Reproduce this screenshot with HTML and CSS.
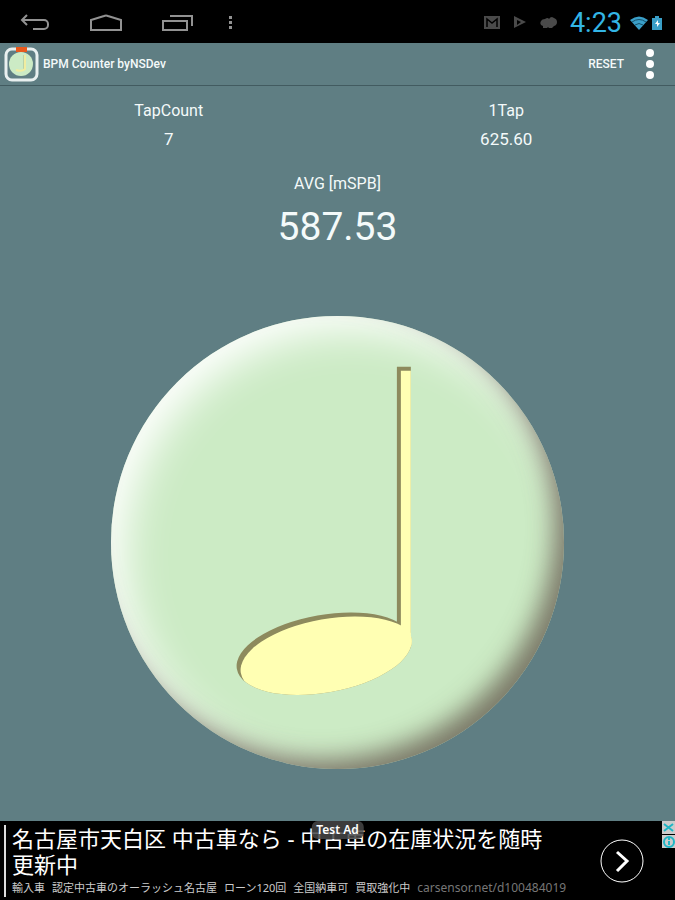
FILE: index.html
```html
<!DOCTYPE html>
<html lang="en">
<head>
    <meta charset="UTF-8">
    <meta name="viewport" content="width=device-width, initial-scale=1.0">
    <title>BPM Counter byNSDev</title>
    <link rel="stylesheet" href="styles.css">
</head>
<body>
    <div class="system-bar">
        <nav class="nav-keys">
            <button class="key" aria-label="Back">
                <svg width="30" height="18" viewBox="0 0 30 18"><path d="M7 1L2 6l5 5M2 6h22a4 4 0 0 1 4 4v1a4 4 0 0 1-4 4H13"/></svg>
            </button>
            <button class="key" aria-label="Home">
                <svg width="34" height="18" viewBox="0 0 34 18"><path d="M2 16V6l13-4q2-1 4 0l13 4v10z"/></svg>
            </button>
            <button class="key" aria-label="Recent apps">
                <svg width="32" height="18" viewBox="0 0 32 18"><path d="M1 7h24v9H1zM8 2h22v10"/></svg>
            </button>
            <button class="key key-more" aria-label="Menu">
                <svg width="4" height="14" viewBox="0 0 4 14"><path d="M0 0h3v3H0zM0 5h3v3H0zM0 10h3v3H0z"/></svg>
            </button>
        </nav>
        <div class="status">
            <svg class="notice" width="16" height="13" viewBox="0 0 16 13"><path d="M0 0h16v13H0z"/><path d="M3 11V3l5 4 5-4v8" fill="none" stroke="#000" stroke-width="1.5"/></svg>
            <svg class="notice" width="14" height="13" viewBox="0 0 14 13"><path d="M1 0l12 6L1 12z"/><path d="M4 4l4 2-4 3z" fill="#000"/></svg>
            <svg class="notice" width="17" height="13" viewBox="0 0 17 13"><path d="M1 5q1-2 4-2 1-1 3-1l1 1q1-2 3-2l2 1q3 1 3 4t-3 4l-2 2H9l-1-1-1 1H3v-2Q-1 9 1 5z"/></svg>
            <span class="clock">4:23</span>
            <svg class="signal" width="18" height="14" viewBox="0 0 18 14"><path d="M0 4q9-7 18 0l-9 10z"/><path d="M2 6q7-5 14 0M5 9q4-3 8 0" fill="none" stroke="#14506a"/></svg>
            <svg class="signal" width="10" height="14" viewBox="0 0 10 14"><path d="M3 0h4v2h3v12H0V2h3z"/><path d="M6 4L3 8h2v3l3-4H6z" fill="#fff"/></svg>
        </div>
    </div>

    <header class="action-bar">
        <svg class="logo" width="35" height="35" viewBox="0 0 35 35">
            <rect x="2" y="2" width="31" height="31" rx="6" fill="#5f7e83" stroke="#e9f0f0" stroke-width="3"/>
            <path d="M12 0h11v5H12z" fill="#e8591c"/>
            <circle cx="17" cy="17" r="12" fill="#ccebc5"/>
            <path d="M20 8v14" fill="none" stroke="#a9b98a" stroke-width="1"/>
            <path d="M21 8v14q-3 3-9 1" fill="none" stroke="#f0eda0" stroke-width="2"/>
        </svg>
        <h1>BPM Counter byNSDev</h1>
        <button class="reset">RESET</button>
        <button class="overflow" aria-label="More options">
            <svg width="10" height="30" viewBox="0 0 10 30"><circle cx="5" cy="4" r="4"/><circle cx="5" cy="15" r="4"/><circle cx="5" cy="26" r="4"/></svg>
        </button>
    </header>

    <main>
        <div class="stats">
            <div class="stat">
                <div>TapCount</div>
                <div class="stat-value">7</div>
            </div>
            <div class="stat">
                <div>1Tap</div>
                <div class="stat-value">625.60</div>
            </div>
        </div>
        <div class="average">
            <div>AVG [mSPB]</div>
            <div class="average-value">587.53</div>
        </div>
        <div class="tap-area">
            <button class="tap" aria-label="Tap">
                <svg viewBox="0 0 454 454">
                    <defs>
                        <g id="note">
                            <path d="M287 51h14v276h-14z"/>
                            <ellipse cx="214" cy="339" rx="89" ry="39" transform="rotate(-10 214 339)"/>
                        </g>
                        <clipPath id="note-clip">
                            <path d="M287 51h14v276h-14z"/>
                            <ellipse cx="214" cy="339" rx="89" ry="39" transform="rotate(-10 214 339)"/>
                        </clipPath>
                    </defs>
                    <use href="#note" fill="#8d8a5d"/>
                    <g clip-path="url(#note-clip)">
                        <use href="#note" x="4" y="4" fill="#ffffb3"/>
                    </g>
                </svg>
            </button>
        </div>
    </main>

    <aside class="ad">
        <span class="ad-tag">Test Ad</span>
        <div class="ad-text">
            <p class="ad-title">名古屋市天白区 中古車なら - 中古車の在庫状況を随時更新中</p>
            <p class="ad-line">
                <span>輸入車</span>
                <span>認定中古車のオーラッシュ名古屋</span>
                <span>ローン120回</span>
                <span>全国納車可</span>
                <span>買取強化中</span>
                <a href="#">carsensor.net/d100484019</a>
            </p>
        </div>
        <button class="ad-go" aria-label="Open ad">
            <svg width="46" height="46" viewBox="0 0 46 46"><circle cx="23" cy="23" r="21"/><path d="M18 14l10 9-10 10" stroke-width="3"/></svg>
        </button>
        <div class="ad-choices">
            <button aria-label="Close ad"><svg width="13" height="13" viewBox="0 0 13 13"><path d="M2 3l9 7M11 3l-9 7"/></svg></button>
            <button aria-label="Ad information"><svg width="13" height="13" viewBox="0 0 13 13"><circle cx="7" cy="7" r="5"/><path d="M7 6v4M7 3v2"/></svg></button>
        </div>
    </aside>
</body>
</html>
```
FILE: styles.css
```css
* { box-sizing: border-box; }
body { display: flex; flex-direction: column; min-height: 100vh; margin: 0; background: #5f7e83; color: #f4fafa; font-family: Roboto, "Noto Sans CJK JP", sans-serif; }
button { display: block; margin: 0; padding: 0; border: none; background: none; color: inherit; font: inherit; cursor: pointer; }
svg { display: block; }
h1, p { margin: 0; }

.system-bar { display: flex; align-items: center; justify-content: space-between; height: 43px; padding: 2px 13px 0 20px; background: #000; }
.nav-keys { display: flex; align-items: center; gap: 39px; }
.key svg { fill: none; stroke: #929292; stroke-width: 2; }
.key-more svg { fill: #929292; stroke: none; }
.key-more { margin-left: -4px; }
.status { display: flex; align-items: center; gap: 4px; }
.notice { margin-right: 9px; fill: #4a4a4a; }
.clock { margin-right: 4px; color: #33b5e5; font-size: 27px; line-height: 40px; }
.signal { fill: #3a9fc8; }

.action-bar { display: flex; align-items: center; height: 43px; padding: 0 20px 0 4px; border-bottom: 1px solid #425b60; }
.action-bar h1 { flex: 1; margin-left: 4px; font-size: 12px; font-weight: 500; }
.reset { font-size: 12px; font-weight: 500; }
.overflow { margin-left: 21px; }
.overflow svg { fill: #fff; }

main { flex: 1; display: flex; flex-direction: column; }
.stats { display: grid; grid-template-columns: 1fr 1fr; padding-top: 11px; }
.stat, .average { font-size: 16px; line-height: 28px; text-align: center; }
.stat-value { font-size: 17px; }
.average { margin-top: 17px; }
.average-value { font-size: 39px; line-height: 58px; }
.tap-area { flex: 1; display: flex; align-items: center; justify-content: center; padding-top: 8px; }
.tap { width: 67%; aspect-ratio: 1; border-radius: 50%; background: #ccebc5; box-shadow: inset -16px -16px 24px -6px rgba(92, 82, 68, .75), inset 14px 14px 44px #fff; }
.tap svg { width: 100%; }

.ad { position: relative; display: flex; align-items: center; height: 79px; background: #000; color: #fff; font-family: "Noto Sans", "Noto Sans CJK JP", sans-serif; }
.ad-text { flex: 1; margin-left: 4px; padding-left: 6px; border-left: 2px solid #ddd; }
.ad-title { max-width: 550px; font-size: 22px; line-height: 26px; }
.ad-line { display: flex; gap: 7px; margin-top: 2px; color: #ccc; font-size: 11px; line-height: 18px; white-space: nowrap; }
.ad-line a { color: #777; font-size: 12px; text-decoration: none; }
.ad-go { margin-right: 30px; }
.ad-go svg { fill: none; stroke: #fff; }
.ad-tag { position: absolute; top: 0; left: 50%; transform: translateX(-50%); padding: 0 5px; border-radius: 6px; background: rgba(70, 70, 70, .85); font-size: 12px; font-weight: 600; line-height: 18px; }
.ad-choices { position: absolute; top: 0; right: 0; }
.ad-choices button { margin-bottom: 1px; background: #ccc; }
.ad-choices svg { fill: none; stroke: #20b5c5; stroke-width: 2; }
```
